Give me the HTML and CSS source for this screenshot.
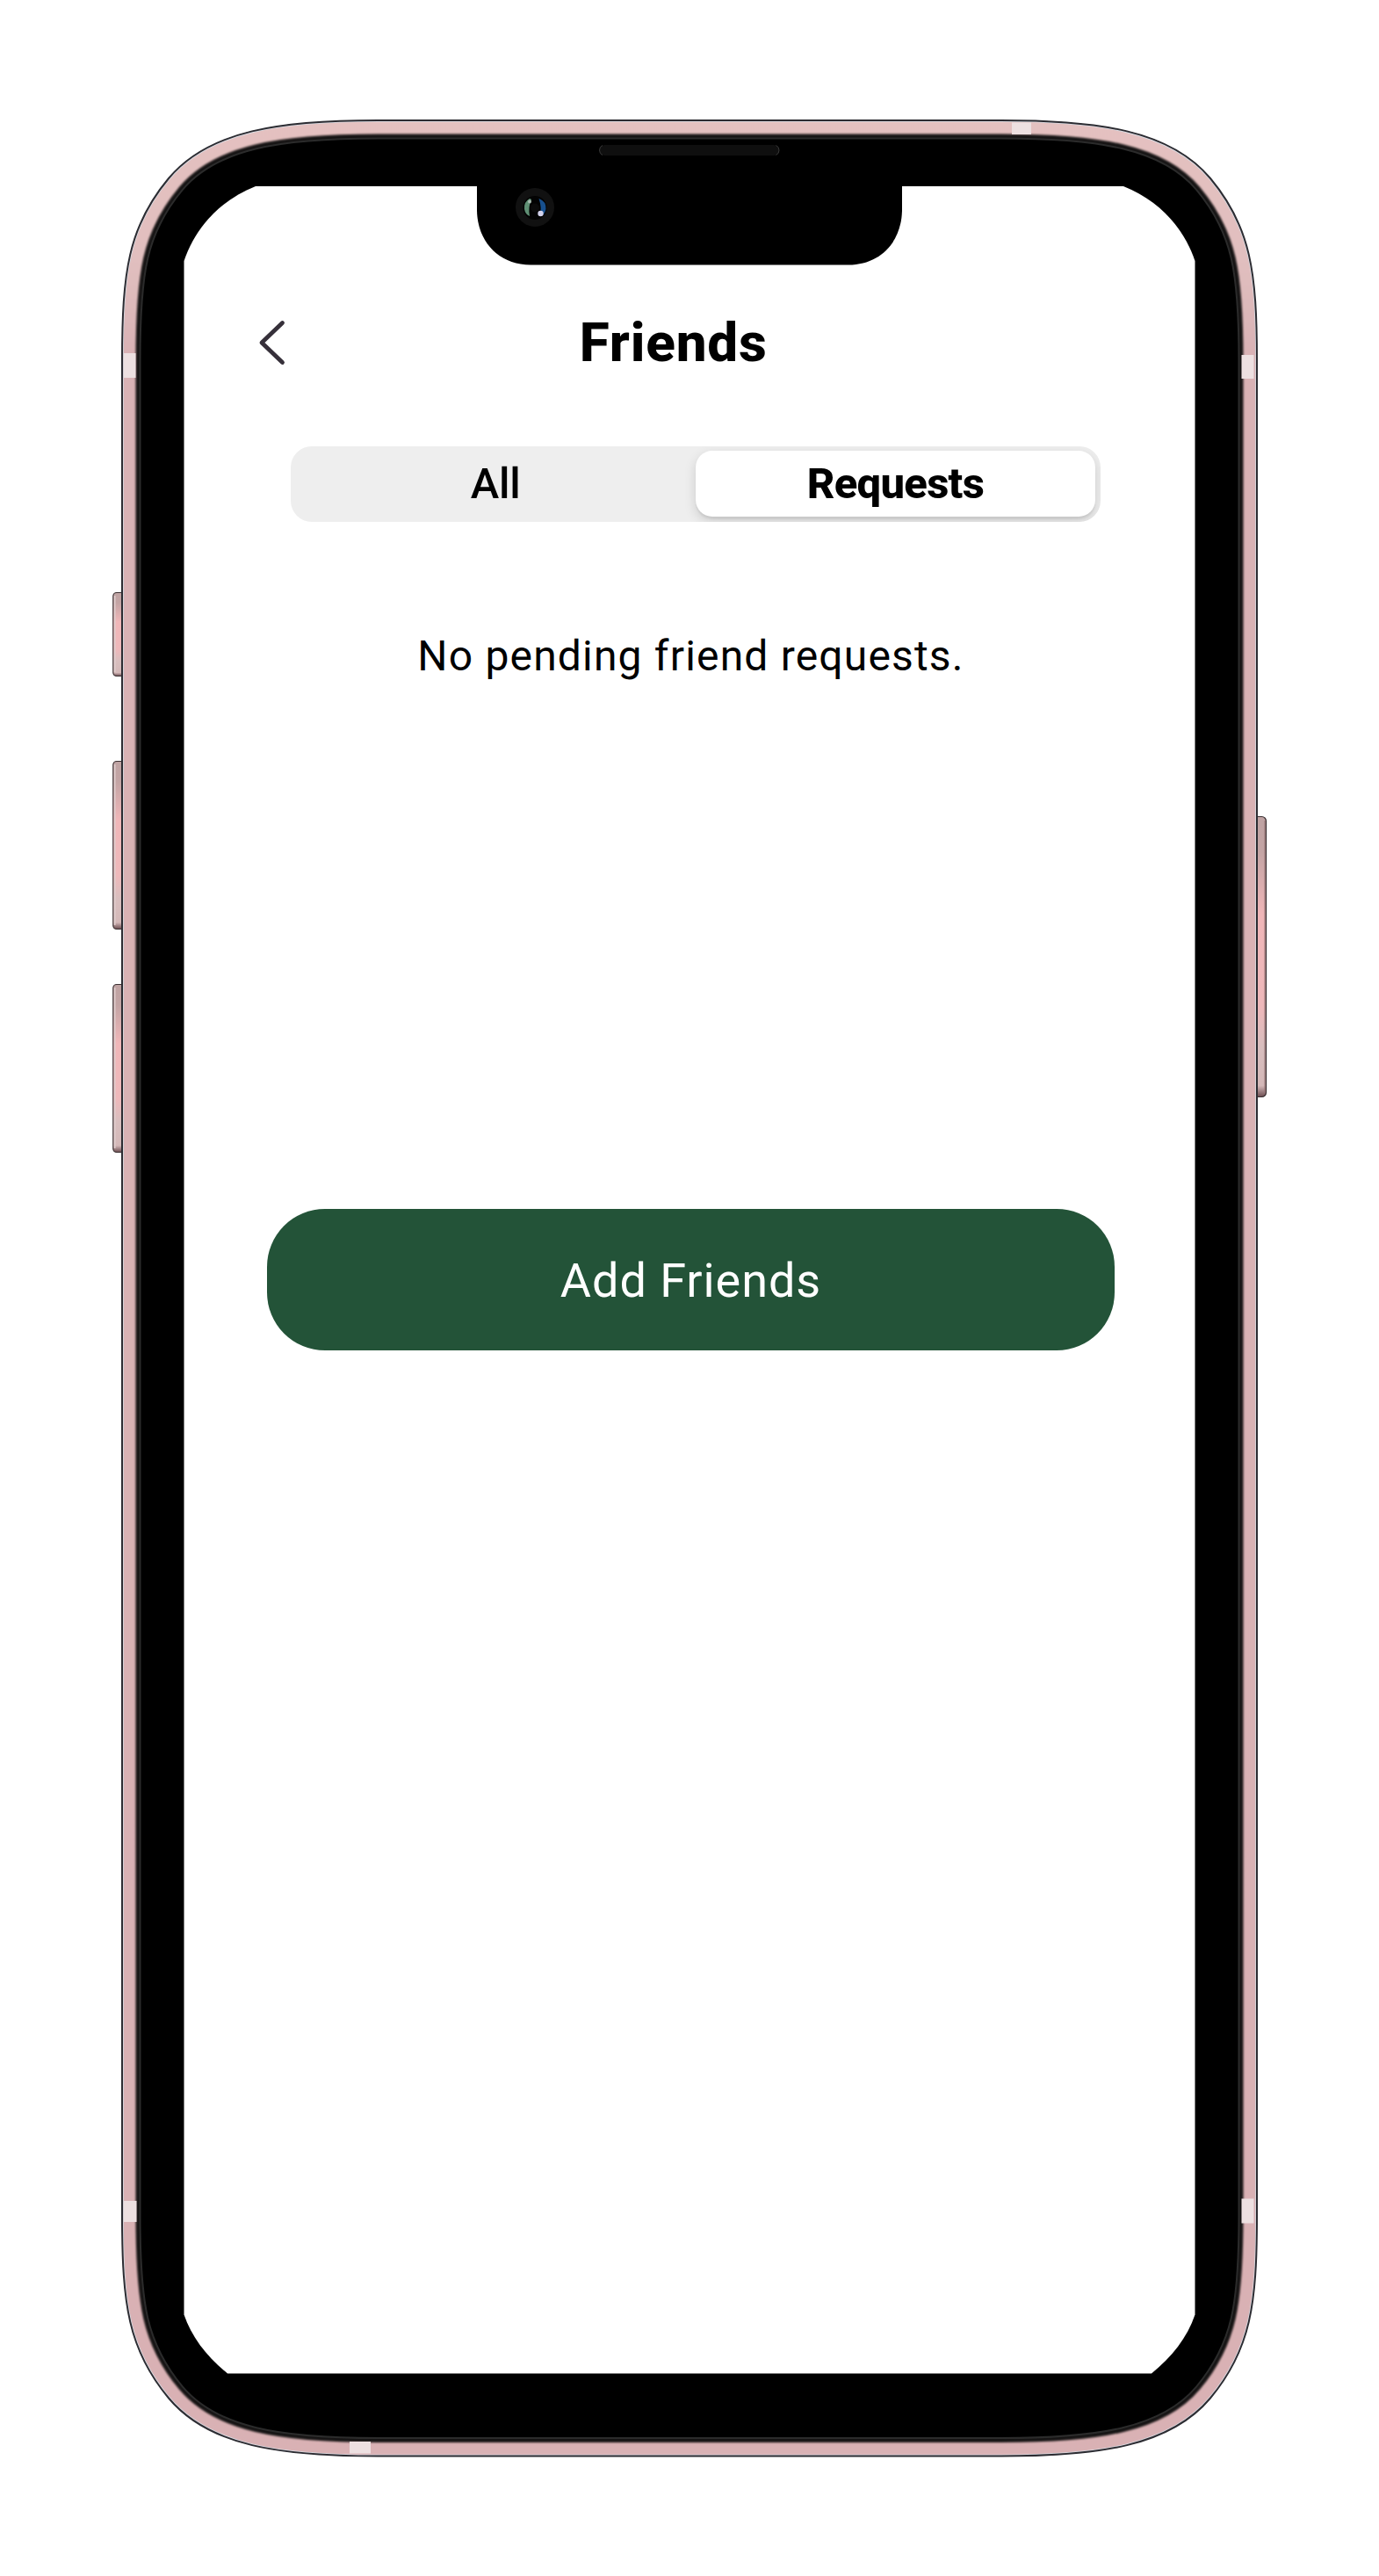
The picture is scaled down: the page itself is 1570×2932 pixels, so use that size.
FILE: index.html
```html
<!DOCTYPE html>
<html lang="en">
<head>
<meta charset="utf-8">
<title>Friends</title>
<link rel="stylesheet" href="styles.css">
</head>
<body>
<div class="phone">
  <svg class="frame" viewBox="0 0 1570 2932" aria-hidden="true">
    <defs>
      <path id="body" d="M139 410C139 310 146 258 192 203C238 148 320 137 430 137H1140C1250 137 1332 148 1378 203C1424 258 1431 310 1431 410V2522.500C1431 2622.500 1424 2674.500 1378 2729.500C1332 2784.500 1250 2795.500 1140 2795.500H430C320 2795.500 238 2784.500 192 2729.500C146 2674.500 139 2622.500 139 2522.500Z"/>
      <clipPath id="body-clip"><use href="#body"/></clipPath>
      <linearGradient id="pink" gradientUnits="userSpaceOnUse" x1="0" y1="137" x2="0" y2="2796">
        <stop offset="0" stop-color="#e4c1c0"/>
        <stop offset=".06" stop-color="#e1bfbf"/>
        <stop offset=".1" stop-color="#d9b2b5"/>
        <stop offset="1" stop-color="#d9b1b4"/>
      </linearGradient>
      <linearGradient id="key" x1="0" y1="0" x2="0" y2="1">
        <stop offset="0" stop-color="#bfa3a3"/>
        <stop offset=".12" stop-color="#c3a4a4"/>
        <stop offset=".35" stop-color="#f0b6b8"/>
        <stop offset=".68" stop-color="#eeb8ba"/>
        <stop offset=".82" stop-color="#d8bebe"/>
        <stop offset=".96" stop-color="#d4b8b8"/>
        <stop offset="1" stop-color="#6b4c50"/>
      </linearGradient>
      <filter id="soft" x="-5%" y="-5%" width="110%" height="110%"><feGaussianBlur stdDeviation=".9"/></filter>
    </defs>

    <g fill="url(#key)" stroke="#3b3032" stroke-width="1.2">
      <rect x="128.800" y="674.500" width="16" height="95" rx="4"/>
      <rect x="128.800" y="866.500" width="16" height="191" rx="4"/>
      <rect x="128.800" y="1120.500" width="16" height="191" rx="4"/>
      <rect x="1425" y="929.500" width="16.500" height="319" rx="5"/>
    </g>
    <g fill="#e0cdcd">
      <rect x="129.800" y="678" width="1.700" height="87"/>
      <rect x="129.800" y="870" width="1.700" height="183"/>
      <rect x="129.800" y="1124" width="1.700" height="183"/>
    </g>
    <rect x="1439.500" y="934" width="1.200" height="310" fill="#8e6f71"/>

    <use href="#body" fill="#000"/>
    <g clip-path="url(#body-clip)" fill="none">
      <use href="#body" stroke="#2b2b2b" stroke-width="43"/>
      <use href="#body" stroke="#161414" stroke-width="39"/>
      <g filter="url(#soft)"><use href="#body" stroke="url(#pink)" stroke-width="31"/></g>
      <use href="#body" stroke="#d8dbe2" stroke-width="3.600"/>
    </g>
    <g fill="#ede0e1">
      <rect x="141" y="402" width="13.500" height="28"/>
      <rect x="1413.500" y="404" width="14" height="27"/>
      <rect x="1152" y="139.500" width="22" height="13.500"/>
      <rect x="141" y="2505" width="14.500" height="24"/>
      <rect x="1413.500" y="2502.500" width="14" height="28"/>
      <rect x="398" y="2779" width="24" height="13.500"/>
    </g>
    <use href="#body" fill="none" stroke="#2c2c32" stroke-width="2"/>

    <path fill="#fff" d="M209.500 297C222 260 249 229 291 212H1279C1321 229 1348 260 1360.500 297V2634.500C1352 2660 1334 2683 1311 2701.500H259C236 2683 218 2660 209.500 2634.500Z"/>
    <path d="M543 211V240C544 276 568 301 604 301.500H966C1002 301 1026 276 1027 240V211Z"/>

    <rect x="682.500" y="165" width="204.500" height="12" rx="6" fill="#0f0f0f"/>
    <path d="M686 165.500Q682.500 167 682.500 171T686 176.500M883.500 165.500Q887 167 887 171T883.500 176.500" fill="none" stroke="#3a3a3a"/>
    <circle cx="609" cy="236" r="22" fill="#111"/>
    <circle cx="609" cy="236.500" r="13.500" fill="#030303"/>
    <path d="M603 226Q596 230 597 238Q598 244 603 246Q601 236 605 227Z" fill="#5f8f74"/>
    <circle cx="603" cy="229.500" r="2" fill="#a9bbb0"/>
    <path d="M613.500 226Q622 229 621.500 238Q620 245 615 246Q617 236 613.500 226Z" fill="#17508f"/>
    <circle cx="615.500" cy="243" r="3.200" fill="#d3d2ec"/>
    <circle cx="609" cy="236.500" r="5" fill="#0b0b0b"/>
  </svg>

  <main class="screen">
    <header class="header">
      <svg class="back" viewBox="0 0 32 56" aria-label="Back"><path d="M27.500 5.500L4 28L27.500 50.500"/></svg>
      <h1 class="title">Friends</h1>
    </header>
    <nav class="tabs">
      <span class="tab">All</span>
      <span class="tab tab-active">Requests</span>
    </nav>
    <p class="empty">No pending friend requests.</p>
    <button class="add" type="button">Add Friends</button>
  </main>
</div>
</body>
</html>
```
FILE: styles.css
```css
* {
  box-sizing: border-box;
}

body {
  margin: 0;
  background: #fff;
  color: #000;
  font-family: Roboto, "Liberation Sans", sans-serif;
}

.phone {
  position: relative;
  width: 1570px;
  height: 2932px;
}

.frame {
  position: absolute;
  inset: 0;
  width: 100%;
  height: 100%;
}

.screen {
  position: relative;
  display: flex;
  flex-direction: column;
  width: 1151px;
  height: 2490px;
  margin-left: 209.5px;
  padding-top: 340px;
}

.header {
  display: grid;
  grid-template-columns: 32px 1fr 32px;
  align-items: center;
  height: 100px;
  margin: 0 121px 0 84.5px;
}

.back {
  width: 32px;
  height: 56px;
  fill: none;
  stroke: #36303a;
  stroke-width: 4.8;
  stroke-linecap: round;
  stroke-linejoin: round;
}

.title {
  margin: 0;
  font-size: 62px;
  font-weight: 850;
  line-height: 72px;
  letter-spacing: .8px;
  text-align: center;
}

.tabs {
  display: grid;
  grid-template-columns: 1fr 1fr;
  width: 921.5px;
  height: 86px;
  margin: 67.8px 0 0 121.5px;
  padding: 5.5px;
  border-radius: 24px;
  background: #eee;
  overflow: hidden;
}

.tab {
  display: flex;
  align-items: center;
  justify-content: center;
  font-size: 49px;
  font-weight: 500;
  letter-spacing: -.3px;
}

.tab-active {
  border-radius: 19px;
  background: #fff;
  box-shadow: 0 5px 14px rgba(0, 0, 0, .14), 0 3px 2px rgba(0, 0, 0, .06);
  font-weight: 850;
  letter-spacing: -.7px;
}

.empty {
  margin: 117.7px 0 0 3px;
  font-size: 48px;
  line-height: 72px;
  letter-spacing: 1.18px;
  text-align: center;
}

.add {
  width: 965px;
  height: 161px;
  margin: 592.5px 0 0 94.5px;
  padding: 2px 0 0;
  border: 0;
  border-radius: 66px;
  background: #235338;
  color: #fff;
  font: 400 54px Roboto, "Liberation Sans", sans-serif;
  letter-spacing: .95px;
}
```
